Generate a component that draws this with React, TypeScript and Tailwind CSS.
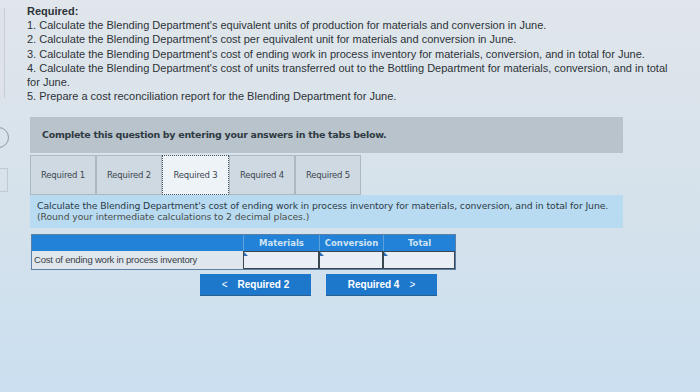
import React from 'react';

const tasks = [
  "1. Calculate the Blending Department's equivalent units of production for materials and conversion in June.",
  "2. Calculate the Blending Department's cost per equivalent unit for materials and conversion in June.",
  "3. Calculate the Blending Department's cost of ending work in process inventory for materials, conversion, and in total for June.",
  "4. Calculate the Blending Department's cost of units transferred out to the Bottling Department for materials, conversion, and in total for June.",
  '5. Prepare a cost reconciliation report for the Blending Department for June.',
];

const tabs = ['Required 1', 'Required 2', 'Required 3', 'Required 4', 'Required 5'];

function InputCell({ width }: { width: string }) {
  return (
    <div className={`relative h-full border border-[#3a4650] bg-[#e9eff4] ${width}`}>
      {/* little marker in the corner */}
      <span className="absolute left-0 top-0 h-0 w-0 border-l-[4px] border-t-[4px] border-l-[#2a6fb8] border-t-transparent" />
    </div>
  );
}

export default function App() {
  return (
    <div className="relative h-[392px] w-[700px] overflow-hidden bg-linear-to-b from-[#e0e6eb] via-[#d6e2eb] to-[#cadff0] font-['Liberation_Sans',Arial,sans-serif] text-[#2d3338]">
      {/* page edge bits */}
      <div className="absolute left-0 top-[8px] h-[90px] w-[5px] border-r border-[#c8cfd4] bg-[#dde3e8]" />
      <div className="absolute left-[-12px] top-[127px] h-[21px] w-[21px] rounded-full border border-[#8c969e]" />
      <div className="absolute left-0 top-[168px] h-[24px] w-[8px] border border-l-0 border-[#c2cad0]" />

      {/* Requirements */}
      <div className="pl-[27px] pt-[4px] text-[11px] leading-[14.2px]">
        <div className="font-bold">Required:</div>
        {tasks.map((t) => (
          <div key={t} className="pr-[20px]">
            {t}
          </div>
        ))}
      </div>

      <div className="ml-[30px] mt-[14px] w-[593px] font-['DejaVu_Sans',Verdana,sans-serif]">
        <div className="flex h-[36px] items-center bg-[#b8c3cb] pl-[12px] text-[9.5px] font-bold tracking-[-0.3px] text-[#2f3a42]">
          Complete this question by entering your answers in the tabs below.
        </div>

        {/* Tabs */}
        <div className="mt-[2px] flex h-[40px]">
          {tabs.map((t, i) =>
            i === 2 ? (
              <div
                key={t}
                className="flex w-[67px] items-center justify-center border border-dotted border-[#45505a] bg-[#eef3f7] text-[8.5px] tracking-[-0.2px] text-[#3b4650]"
              >
                {t}
              </div>
            ) : (
              <div
                key={t}
                className="flex w-[66px] items-center justify-center border border-[#aeb8c0] bg-[#cfd9e1] text-[8.5px] tracking-[-0.2px] text-[#3b4650]"
              >
                {t}
              </div>
            )
          )}
        </div>

        {/* Instruction */}
        <div className="flex h-[33px] flex-col justify-center bg-[#b9dbf2] pl-[7px] text-[9.3px] leading-[10.5px] tracking-[-0.1px] text-[#2c3a45]">
          <div>
            Calculate the Blending Department's cost of ending work in process inventory for materials, conversion, and in total for June.
          </div>
          <div className="text-[#4a4f4a]">(Round your intermediate calculations to 2 decimal places.)</div>
        </div>

        {/* Table */}
        <div className="ml-[1px] mt-[6px] w-[425px] border border-[#5b7fa6]">
          <div className="flex h-[16px] bg-[#2282d8] text-[8.5px] font-bold text-[#cfe2f2]">
            <div className="w-[211px]" />
            <div className="flex w-[76px] items-center justify-center border-l border-[#5ea2dc]">Materials</div>
            <div className="flex w-[64px] items-center justify-center border-l border-[#5ea2dc]">Conversion</div>
            <div className="flex flex-1 items-center justify-center border-l border-[#5ea2dc]">Total</div>
          </div>
          <div className="flex h-[18px]">
            <div className="flex w-[211px] items-center bg-[#dfe6ec] pl-[2px] font-['Liberation_Sans',Arial,sans-serif] text-[9.5px] tracking-[-0.2px] text-[#3a4048]">
              Cost of ending work in process inventory
            </div>
            <InputCell width="w-[76px]" />
            <InputCell width="w-[64px]" />
            <InputCell width="flex-1" />
          </div>
        </div>

        {/* Navigation */}
        <div className="ml-[170px] mt-[4px] flex gap-[15px] font-['Liberation_Sans',Arial,sans-serif] text-[10px] font-bold text-white">
          <button className="flex h-[21px] w-[111px] items-center justify-center gap-[10px] bg-[#1d78cc] shadow-[0_1px_0_#2b5f8f]">
            <span className="font-normal">&lt;</span>
            <span>Required 2</span>
          </button>
          <button className="flex h-[21px] w-[111px] items-center justify-center gap-[10px] bg-[#1d78cc] shadow-[0_1px_0_#2b5f8f]">
            <span>Required 4</span>
            <span className="font-normal">&gt;</span>
          </button>
        </div>
      </div>
    </div>
  );
}
